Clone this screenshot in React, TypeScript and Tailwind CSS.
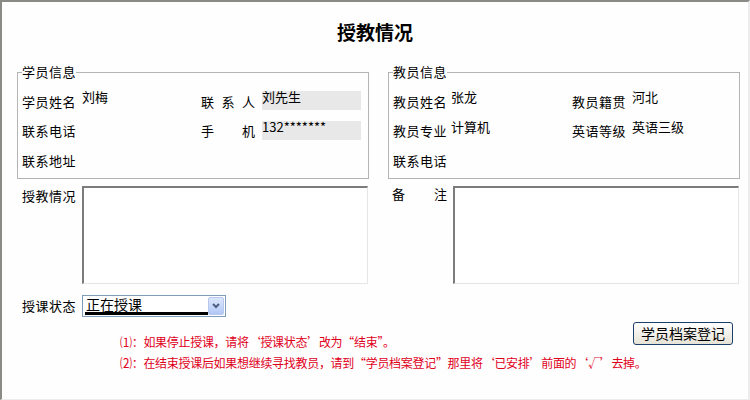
import React from "react";

const font = { fontFamily: '"Noto Sans CJK SC", "Noto Sans", sans-serif' };

function Row({ children }: { children: React.ReactNode }) {
  return <div className="flex h-[29.5px] items-center">{children}</div>;
}

function Label({ text, w = "w-[60px]" }: { text: string; w?: string }) {
  return <div className={`${w} shrink-0 text-[13px] leading-4 tracking-[0.5px] text-black`}>{text}</div>;
}

function Spread({ chars, w = "w-[54px]" }: { chars: string[]; w?: string }) {
  return (
    <div className={`${w} flex shrink-0 justify-between text-[13px] leading-4 text-black`}>
      {chars.map((c, i) => (
        <span key={i}>{c}</span>
      ))}
    </div>
  );
}

function Value({ text, w, shaded }: { text: string; w: string; shaded?: boolean }) {
  return (
    <div
      className={`${w} h-[19px] shrink-0 -translate-y-[1px] text-[13px] leading-[12px] text-black ${
        shaded ? "bg-[#e8e8e8]" : ""
      }`}
    >
      {text}
    </div>
  );
}

function Box({ legend, children }: { legend: string; children: React.ReactNode }) {
  return (
    <fieldset className="w-[352px] border border-[#b4b4b4] pb-[2px] pl-[4px] pr-0 pt-[7px]">
      <legend className="p-0 text-[13px] leading-4 tracking-[0.5px] text-black">{legend}</legend>
      {children}
    </fieldset>
  );
}

function Area({ w }: { w: string }) {
  return (
    <div
      className={`${w} h-[98px] border-b border-l-2 border-r border-t-2 border-b-[#e6e6e6] border-l-[#7c7c7c] border-r-[#e6e6e6] border-t-[#7c7c7c] bg-white`}
    />
  );
}

export default function App() {
  return (
    <div
      style={font}
      className="h-[400px] w-[750px] overflow-hidden border-b border-l-2 border-r-2 border-t-2 border-b-[#ececec] border-l-[#8a8a87] border-r-[#ececec] border-t-[#8a8a87] bg-[#fefefe]"
    >
      <h1 className="mt-[18px] text-center text-[19px] font-bold leading-6 text-black">授教情况</h1>

      <div className="mt-[20px] flex gap-[19px] pl-[15px]">
        <Box legend="学员信息">
          <Row>
            <Label text="学员姓名" />
            <Value text="刘梅" w="w-[119px]" />
            <Spread chars={["联", "系", "人"]} />
            <div className="w-[7px]" />
            <Value text="刘先生" w="w-[99px]" shaded />
          </Row>
          <Row>
            <Label text="联系电话" />
            <div className="w-[119px]" />
            <Spread chars={["手", "机"]} />
            <div className="w-[7px]" />
            <Value text="132*******" w="w-[99px]" shaded />
          </Row>
          <Row>
            <Label text="联系地址" />
          </Row>
        </Box>
        <Box legend="教员信息">
          <Row>
            <Label text="教员姓名" w="w-[58px]" />
            <Value text="张龙" w="w-[121px]" />
            <Label text="教员籍贯" />
            <Value text="河北" w="w-[100px]" />
          </Row>
          <Row>
            <Label text="教员专业" w="w-[58px]" />
            <Value text="计算机" w="w-[121px]" />
            <Label text="英语等级" />
            <Value text="英语三级" w="w-[100px]" />
          </Row>
          <Row>
            <Label text="联系电话" />
          </Row>
        </Box>
      </div>

      <div className="mt-[7px] flex pl-[20px]">
        <div className="flex w-[370px] items-start">
          <div className="w-[60px] pt-[2px] text-[13px] leading-4 tracking-[0.5px] text-black">授教情况</div>
          <Area w="w-[286px]" />
        </div>
        <div className="flex items-start">
          <Spread chars={["备", "注"]} w="w-[55px]" />
          <div className="w-[6px]" />
          <Area w="w-[286px]" />
        </div>
      </div>

      <div className="mt-[11px] flex items-center pl-[20px]">
        <div className="w-[60px] text-[13px] leading-4 tracking-[0.5px] text-black">授课状态</div>
        <div className="flex h-[22px] w-[144px] items-center justify-between border border-[#7f9db9] bg-white pl-[2px] pr-[1px]">
          <div className="h-[18px] w-[123px] border-b-[3px] border-black pl-[1px] text-[14px] leading-[14px] text-black">
            正在授课
          </div>
          <div className="flex h-[18px] w-[16px] items-center justify-center rounded-[2px] border border-[#b7c8f0] bg-gradient-to-b from-[#dce6fd] to-[#b4c8f6]">
            <svg width="8" height="6" viewBox="0 0 8 6">
              <path d="M1 1 L4 4 L7 1" fill="none" stroke="#4d6185" strokeWidth="2" />
            </svg>
          </div>
        </div>
      </div>

      <div className="mt-[5px] flex items-start pl-[118px] pr-[15px]">
        <div className="w-[480px] shrink-0 whitespace-nowrap pt-[9px] text-[12px] leading-[21px] tracking-[-0.3px] text-[#e0001b]">
          <div>⑴：如果停止授课，请将‘授课状态’改为“结束”。</div>
          <div>⑵：在结束授课后如果想继续寻找教员，请到“学员档案登记”那里将‘已安排’前面的‘√’去掉。</div>
        </div>
        <button className="ml-auto h-[23px] w-[100px] shrink-0 rounded-[3px] border border-[#1c3f6b] bg-gradient-to-b from-white to-[#e6e3d6] text-[14px] leading-4 text-black">
          学员档案登记
        </button>
      </div>
    </div>
  );
}
